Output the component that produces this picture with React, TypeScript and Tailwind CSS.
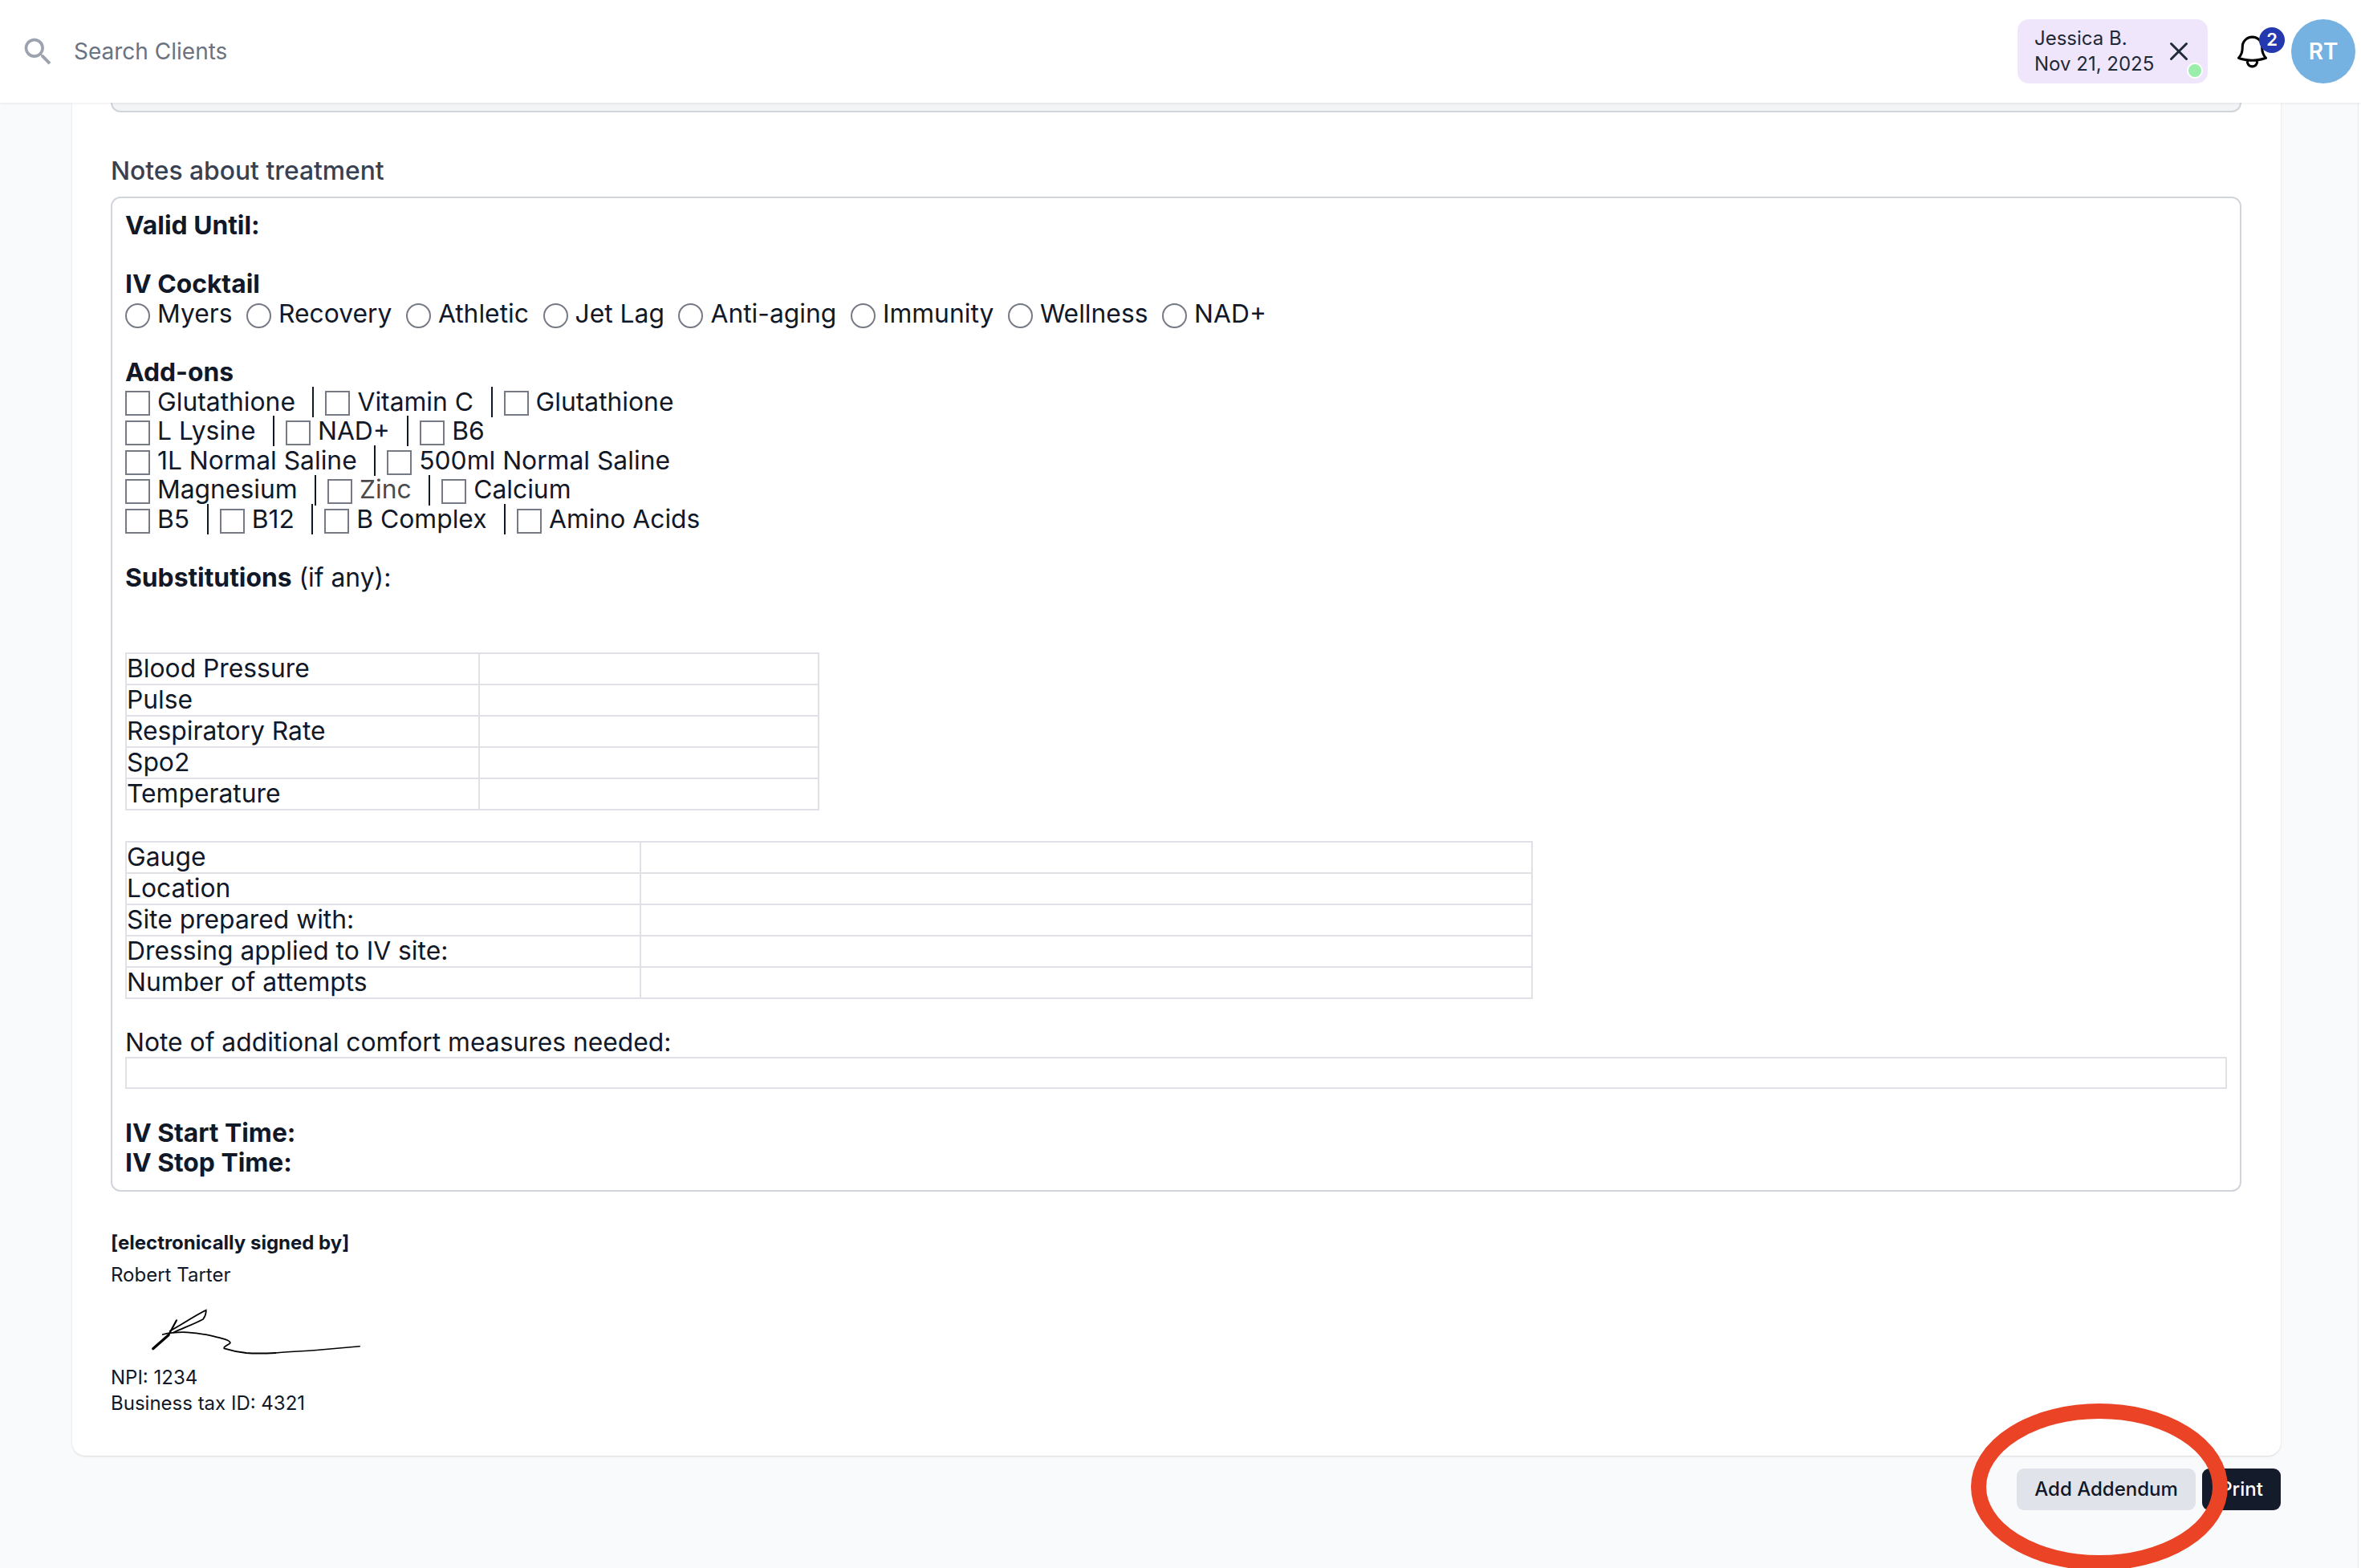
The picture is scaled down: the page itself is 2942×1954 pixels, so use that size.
import { HiOutlineBell } from "react-icons/hi2";
import { MdSearch } from "react-icons/md";
import { X } from "lucide-react";

const font = "font-['Inter',sans-serif]";

function Radio({ label }: { label: string }) {
  return (
    <span className="inline-flex items-center">
      <span className="w-[31px] h-[31px] translate-y-[2px] mr-[9px] rounded-full border-2 border-[#767a85] bg-white" />
      {label}
    </span>
  );
}

function Check({ label, muted }: { label: string; muted?: boolean }) {
  return (
    <span className={`inline-flex items-center ${muted ? "text-[#4b4b4b]" : ""}`}>
      <span className="w-[31px] h-[31px] translate-y-[2px] mr-[9px] border-2 border-[#767a85] bg-white" />
      {label}
    </span>
  );
}

function CheckRow({ items }: { items: string[] }) {
  return (
    <div className="flex items-center h-[36.6px]">
      {items.map((item, i) => (
        <div key={item} className="flex items-center">
          {i > 0 && <span className="w-[2px] h-[38px] bg-[#111827] ml-[21.5px] mr-[14px]" />}
          <Check label={item} muted={item === "Zinc"} />
        </div>
      ))}
    </div>
  );
}

function VitalsTable({ rows, width, first }: { rows: string[]; width: string; first: string }) {
  return (
    <table className={`border-collapse ${width}`}>
      <tbody>
        {rows.map((r) => (
          <tr key={r} className="h-[39px]">
            <td className={`border-2 border-[#dfe1e6] p-0 leading-[34px] ${first}`}>{r}</td>
            <td className="border-2 border-[#dfe1e6] p-0" />
          </tr>
        ))}
      </tbody>
    </table>
  );
}

export default function App() {
  return (
    <div className={`${font} relative h-[1954px] bg-[#f9fafb] overflow-hidden text-[#111827]`}>
      <header className="h-[128px] bg-white flex items-center justify-between pl-[25px] pr-[7px] shadow-[0_1px_3px_rgba(0,0,0,0.08)] relative z-10">
        <div className="flex items-center gap-[22px] text-[#6b7280] text-[28px]">
          <MdSearch className="w-[45px] h-[45px] text-[#9ca3af]" />
          <span>Search Clients</span>
        </div>
        <div className="flex items-center">
          <div className="relative flex items-center w-[237px] h-[80px] rounded-[14px] bg-[#f0e6fb] pl-[21px] text-[24px] leading-[32px] text-[#1f2937]">
            <div className="whitespace-nowrap">
              Jessica B.
              <br />
              Nov 21, 2025
            </div>
            <X className="w-[38px] h-[38px] ml-[12px]" strokeWidth={1.9} />
            <span className="absolute right-[6px] bottom-[6px] w-[20px] h-[20px] rounded-full bg-[#9bedaa] border-2 border-white" />
          </div>
          <div className="relative ml-[31px] mr-[24px]">
            <HiOutlineBell className="block w-[49px] h-[49px] text-black" />
            <span className="absolute -top-[6px] left-[33px] w-[32px] h-[32px] rounded-full bg-[#2439b0] text-white text-[22px] font-semibold flex items-center justify-center">
              2
            </span>
          </div>
          <div className="w-[80px] h-[80px] rounded-full bg-[#75b2e1] text-white text-[28px] font-semibold flex items-center justify-center">
            RT
          </div>
        </div>
      </header>

      <div className="flex">
        <main className="flex-1 pl-[90px] pr-[96px]">
          <div className="bg-white rounded-b-[16px] shadow-sm pl-[48px] pr-[49px] h-[1686px]">
            <div className="h-[12px] bg-[#f3f4f6] border-2 border-t-0 border-[#d1d5db] rounded-b-[16px]" />
            <div className="text-[31.8px] leading-[40px] font-medium text-[#374151] mt-[53px]">Notes about treatment</div>
            <div className="mt-[12px] h-[1240px] border-2 border-[#d1d5db] rounded-[12px] px-[16px] pt-[16px] text-[31.8px] leading-[36.6px]">
              <div className="font-bold">Valid Until:</div>
              <div className="font-bold mt-[36.6px]">IV Cocktail</div>
              <div className="flex gap-[17.6px] h-[36.6px] items-center">
                {["Myers", "Recovery", "Athletic", "Jet Lag", "Anti-aging", "Immunity", "Wellness", "NAD+"].map((r) => (
                  <Radio key={r} label={r} />
                ))}
              </div>
              <div className="font-bold mt-[36.6px]">Add-ons</div>
              <CheckRow items={["Glutathione", "Vitamin C", "Glutathione"]} />
              <CheckRow items={["L Lysine", "NAD+", "B6"]} />
              <CheckRow items={["1L Normal Saline", "500ml Normal Saline"]} />
              <CheckRow items={["Magnesium", "Zinc", "Calcium"]} />
              <CheckRow items={["B5", "B12", "B Complex", "Amino Acids"]} />
              <div className="mt-[36.6px]">
                <span className="font-bold">Substitutions</span> (if any):
              </div>
              <div className="mt-[74px]">
                <VitalsTable rows={["Blood Pressure", "Pulse", "Respiratory Rate", "Spo2", "Temperature"]} width="w-[865px]" first="w-[440px]" />
              </div>
              <div className="mt-[38px]">
                <VitalsTable rows={["Gauge", "Location", "Site prepared with:", "Dressing applied to IV site:", "Number of attempts"]} width="w-[1754px]" first="w-[641px]" />
              </div>
              <div className="mt-[36px]">Note of additional comfort measures needed:</div>
              <div className="h-[40px] border-2 border-[#dfe1e6]" />
              <div className="font-bold mt-[36.6px]">IV Start Time:</div>
              <div className="font-bold">IV Stop Time:</div>
            </div>
            <div className="mt-[48px] text-[24px] leading-[32px]">
              <div className="font-bold">[electronically signed by]</div>
              <div className="mt-[8px]">Robert Tarter</div>
              <svg className="block ml-[42px] mt-[22px]" width="275" height="65" viewBox="0 0 275 65" fill="none" stroke="#000" strokeWidth="1.8" strokeLinecap="round">
                <path d="M10.7 53.7 L30 36.7" strokeWidth="3.2" />
                <path d="M30 36.7 L40 18.3" strokeWidth="2.2" />
                <path d="M31.7 31.7 C46 24 62 13 76.7 5.7 C77 10 76 13 73 17 C62 23 48 28 36.7 33.3" />
                <path d="M22.7 36 C35 33 45 33 53.3 33.3 C66 34 77 36 86.7 38.3 C96 41 108 43 106.7 46.7 C105 49 98 51 99.3 53.3 C108 56 117 58 126.7 59 C140 60 152 59.5 163.3 59" />
                <path d="M163.3 59 C182 57.5 202 56.5 220 55 C236 53.5 252 52 268.3 50.7" strokeWidth="1.4" />
              </svg>
              <div className="mt-[9px]">NPI: 1234</div>
              <div>Business tax ID: 4321</div>
            </div>
          </div>
          <div className="flex justify-end gap-[8px] mt-[16px] text-[24px] font-medium">
            <button className="h-[52px] w-[223px] rounded-[9px] bg-[#e0e4ea] text-[#111827]">Add Addendum</button>
            <button className="h-[52px] w-[98px] rounded-[9px] bg-[#141b2b] text-white">Print</button>
          </div>
        </main>
        <div className="w-[4px] h-[1826px] bg-white border-l border-[#e5e7eb]" />
      </div>

      <svg className="absolute left-[2450px] top-[1745px]" width="332" height="209" viewBox="0 0 332 209" fill="none">
        <ellipse cx="166" cy="108" rx="150.5" ry="94.5" stroke="#ea4325" strokeWidth="19" />
      </svg>
    </div>
  );
}
